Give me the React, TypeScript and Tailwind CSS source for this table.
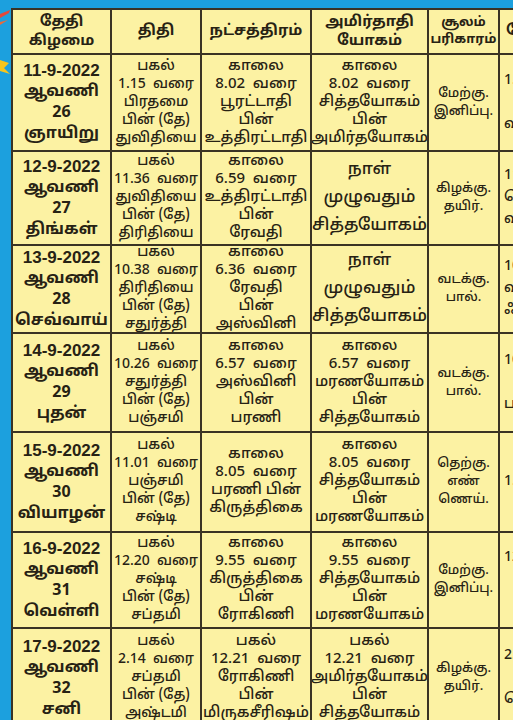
import React from 'react';

type Row = {
  date: string[];
  thithi: string[];
  star: string[];
  yogam: string[];
  yogamBig?: boolean;
  soolam: string[];
  time: string[];
};

const ROWS: Row[] = [
  {
    date: ['11-9-2022', 'ஆவணி', '26', 'ஞாயிறு'],
    thithi: ['பகல்', '1.15  வரை', 'பிரதமை', 'பின் (தே)', 'துவிதியை'],
    star: ['காலை', '8.02  வரை', 'பூரட்டாதி', 'பின்', 'உத்திரட்டாதி'],
    yogam: ['காலை', '8.02  வரை', 'சித்தயோகம்', 'பின்', 'அமிர்தயோகம்'],
    soolam: ['மேற்கு.', 'இனிப்பு.'],
    time: ['1.30', '', 'வரை'],
  },
  {
    date: ['12-9-2022', 'ஆவணி', '27', 'திங்கள்'],
    thithi: ['பகல்', '11.36  வரை', 'துவிதியை', 'பின் (தே)', 'திரிதியை'],
    star: ['காலை', '6.59  வரை', 'உத்திரட்டாதி', 'பின்', 'ரேவதி'],
    yogam: ['நாள்', 'முழுவதும்', 'சித்தயோகம்'],
    yogamBig: true,
    soolam: ['கிழக்கு.', 'தயிர்.'],
    time: ['11.00', 'ெ', 'வரை'],
  },
  {
    date: ['13-9-2022', 'ஆவணி', '28', 'செவ்வாய்'],
    thithi: ['பகல்', '10.38  வரை', 'திரிதியை', 'பின் (தே)', 'சதுர்த்தி'],
    star: ['காலை', '6.36  வரை', 'ரேவதி', 'பின்', 'அஸ்வினி'],
    yogam: ['நாள்', 'முழுவதும்', 'சித்தயோகம்'],
    yogamBig: true,
    soolam: ['வடக்கு.', 'பால்.'],
    time: ['10.30', 'வரை', 'ஃ'],
  },
  {
    date: ['14-9-2022', 'ஆவணி', '29', 'புதன்'],
    thithi: ['பகல்', '10.26  வரை', 'சதுர்த்தி', 'பின் (தே)', 'பஞ்சமி'],
    star: ['காலை', '6.57  வரை', 'அஸ்வினி', 'பின்', 'பரணி'],
    yogam: ['காலை', '6.57  வரை', 'மரணயோகம்', 'பின்', 'சித்தயோகம்'],
    soolam: ['வடக்கு.', 'பால்.'],
    time: ['10.30', '', 'பகல்'],
  },
  {
    date: ['15-9-2022', 'ஆவணி', '30', 'வியாழன்'],
    thithi: ['பகல்', '11.01  வரை', 'பஞ்சமி', 'பின் (தே)', 'சஷ்டி'],
    star: ['காலை', '8.05  வரை', 'பரணி பின்', 'கிருத்திகை'],
    yogam: ['காலை', '8.05  வரை', 'சித்தயோகம்', 'பின்', 'மரணயோகம்'],
    soolam: ['தெற்கு.', 'எண்', 'ணெய்.'],
    time: ['1.30'],
  },
  {
    date: ['16-9-2022', 'ஆவணி', '31', 'வெள்ளி'],
    thithi: ['பகல்', '12.20  வரை', 'சஷ்டி', 'பின் (தே)', 'சப்தமி'],
    star: ['காலை', '9.55  வரை', 'கிருத்திகை', 'பின்', 'ரோகிணி'],
    yogam: ['காலை', '9.55  வரை', 'சித்தயோகம்', 'பின்', 'மரணயோகம்'],
    soolam: ['மேற்கு.', 'இனிப்பு.'],
    time: ['12.00', '', ''],
  },
  {
    date: ['17-9-2022', 'ஆவணி', '32', 'சனி'],
    thithi: ['பகல்', '2.14  வரை', 'சப்தமி', 'பின் (தே)', 'அஷ்டமி'],
    star: ['பகல்', '12.21  வரை', 'ரோகிணி', 'பின்', 'மிருகசீரிஷம்'],
    yogam: ['பகல்', '12.21  வரை', 'அமிர்தயோகம்', 'பின்', 'சித்தயோகம்'],
    soolam: ['கிழக்கு.', 'தயிர்.'],
    time: ['2.00', '', 'ெ'],
  },
];

const cell = 'border-r-2 border-b-2 border-[#3a3324] bg-[#fcf2a3] flex flex-col items-center justify-center text-center overflow-hidden';

function Lines({ lines, className }: { lines: string[]; className: string }) {
  return (
    <>
      {lines.map((l, i) => (
        <span key={i} className={`block whitespace-pre ${className}`}>
          {l || '\u00a0'}
        </span>
      ))}
    </>
  );
}

export default function App() {
  return (
    <div
      className="relative w-[513px] h-[720px] overflow-hidden bg-[#1ca0de] pt-[8px] pl-[11px] text-[#272214]"
      style={{ fontFamily: '"Noto Sans Tamil", "Noto Sans", "Liberation Sans", sans-serif' }}
    >
      {/* left strip decorations */}
      <svg className="absolute left-0 top-[8px]" width="11" height="80" viewBox="0 0 11 80">
        <path d="M0 6 L10 2 L9 5 L0 10 Z" fill="#e2483a" />
        <path d="M0 14 L8 12 L0 17 Z" fill="#e86a3c" />
        <path d="M0 52 L9 55 L4 60 L10 66 L0 63 Z" fill="#f6c51d" />
      </svg>

      <div className="grid w-[577px] grid-cols-[99px_90px_110px_117px_71px_90px] grid-rows-[45px_97px_94px_88px_99px_100px_96px_100px] border-l-2 border-t-2 border-[#3a3324]">
        {/* header */}
        <div className={cell}>
          <Lines lines={['தேதி', 'கிழமை']} className="text-[15px] font-bold leading-[19px]" />
        </div>
        <div className={cell}>
          <Lines lines={['திதி']} className="text-[15px] font-bold leading-[19px]" />
        </div>
        <div className={cell}>
          <Lines lines={['நட்சத்திரம்']} className="text-[15px] font-bold leading-[19px]" />
        </div>
        <div className={cell}>
          <Lines lines={['அமிர்தாதி', 'யோகம்']} className="text-[15px] font-bold leading-[19px]" />
        </div>
        <div className={cell}>
          <Lines lines={['சூலம்', 'பரிகாரம்']} className="text-[13px] font-bold leading-[17px]" />
        </div>
        <div className={`${cell} !items-start pl-[6px]`}>
          <Lines lines={['நேரம்']} className="text-[15px] font-bold leading-[19px]" />
        </div>

        {ROWS.map((r, i) => (
          <React.Fragment key={i}>
            <div className={cell}>
              <span className="block text-[17px] font-bold leading-[22px]" style={{ fontFamily: '"Liberation Sans", Arial, sans-serif' }}>
                {r.date[0]}
              </span>
              <Lines lines={r.date.slice(1)} className="text-[16px] font-bold leading-[21px]" />
            </div>
            <div className={cell}>
              <Lines lines={r.thithi} className="text-[14px] font-medium leading-[18px]" />
            </div>
            <div className={cell}>
              <Lines lines={r.star} className="text-[15px] font-medium leading-[18px]" />
            </div>
            <div className={cell}>
              {r.yogamBig ? (
                <Lines lines={r.yogam} className="text-[17px] font-medium leading-[28px]" />
              ) : (
                <Lines lines={r.yogam} className="text-[15px] font-medium leading-[18px]" />
              )}
            </div>
            <div className={cell}>
              <Lines lines={r.soolam} className="text-[13px] font-medium leading-[18px]" />
            </div>
            <div className={`${cell} !items-start pl-[4px]`}>
              <Lines lines={r.time} className="text-[14px] font-medium leading-[22px]" />
            </div>
          </React.Fragment>
        ))}
      </div>
    </div>
  );
}
